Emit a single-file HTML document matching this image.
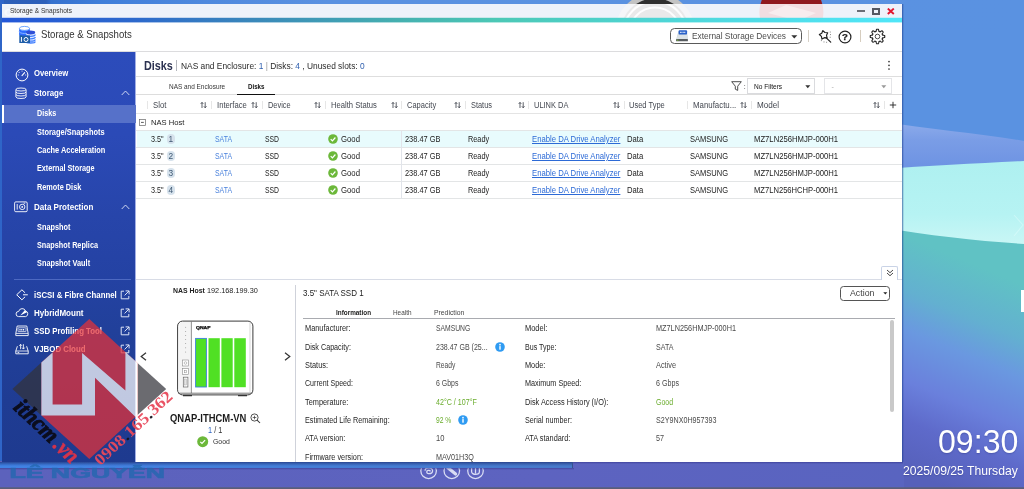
<!DOCTYPE html>
<html lang="en">
<head>
<meta charset="utf-8">
<title>Storage &amp; Snapshots</title>
<style>
*{box-sizing:border-box;margin:0;padding:0}
html,body{width:1024px;height:489px;overflow:hidden}
body{position:relative;font-family:"Liberation Sans",sans-serif;color:#222;background:#5a92e1}
.abs{position:absolute}
.t{position:absolute;white-space:nowrap;line-height:1;transform-origin:0 50%}
#stage{position:absolute;left:0;top:0;width:1024px;height:489px;will-change:transform}
#wall{position:absolute;left:0;top:0;width:1024px;height:489px}
a{color:inherit}
</style>
</head>
<body>
<!-- WALLPAPER -->
<svg id="wall" viewBox="0 0 1024 489" preserveAspectRatio="none">
<defs>
<linearGradient id="lav" x1="0" y1="0" x2="0" y2="1">
<stop offset="0" stop-color="#8eaceb"/><stop offset="0.35" stop-color="#7a9de6"/><stop offset="1" stop-color="#6a90e2"/>
</linearGradient>
<linearGradient id="cy" x1="0" y1="0" x2="0" y2="1">
<stop offset="0" stop-color="#aef0f0"/><stop offset="0.6" stop-color="#b6f3f3"/><stop offset="1" stop-color="#cdf7f6"/>
</linearGradient>
<linearGradient id="low" gradientUnits="userSpaceOnUse" x1="904" y1="235" x2="820.5" y2="435.3">
<stop offset="0" stop-color="#60c2c4"/><stop offset="0.234" stop-color="#63b0d0"/><stop offset="0.40" stop-color="#6a98e0"/><stop offset="0.617" stop-color="#6a80dc"/><stop offset="0.787" stop-color="#5e6aca"/><stop offset="1" stop-color="#5660ba"/>
</linearGradient>
<linearGradient id="bot" x1="0" y1="0" x2="1" y2="0">
<stop offset="0" stop-color="#5c62bc"/><stop offset="0.6" stop-color="#5d63c0"/><stop offset="1" stop-color="#5964c0"/>
</linearGradient>
<linearGradient id="topg" x1="0" y1="0" x2="1" y2="0">
<stop offset="0" stop-color="#2c5eb8"/><stop offset="0.045" stop-color="#2d60ba"/><stop offset="0.05" stop-color="#3470ce"/><stop offset="0.1" stop-color="#3f7eda"/><stop offset="0.2" stop-color="#4f89de"/><stop offset="0.32" stop-color="#5a91e1"/><stop offset="1" stop-color="#5a92e1"/>
</linearGradient>
</defs>
<rect width="1024" height="489" fill="#5a92e1"/>
<rect x="0" y="0" width="1024" height="30" fill="url(#topg)"/>
<rect x="0" y="0" width="4" height="470" fill="#2f65c8"/>
<!-- lavender-blue wave band -->
<path d="M880 121 C 930 130 980 133 1024 141 L1024 175 L880 175 Z" fill="url(#lav)"/>
<!-- light cyan band -->
<path d="M880 169 C 930 166 980 163 1024 161 L1024 250 L880 250 Z" fill="url(#cy)"/>
<!-- teal below -->
<path d="M880 227 C 930 236 980 241 1024 244 L1024 300 L880 300 Z" fill="url(#low)"/>
<rect x="880" y="262" width="144" height="227" fill="url(#low)"/>
<path d="M1014 215 L1023 225 L1014 236" fill="none" stroke="#e8ffff" stroke-width="1.1" opacity="0.4"/>
<rect x="1021" y="290" width="3" height="22" fill="#fff"/>
<!-- desktop icons peeking above the window -->
<circle cx="655" cy="33" r="40.3" fill="#c3c3c3"/>
<circle cx="655" cy="33" r="34.6" fill="#2f2f2f"/>
<circle cx="791.4" cy="12" r="32" fill="#8f181e"/>
<!-- bottom area -->
<rect x="0" y="461" width="904" height="28" fill="url(#bot)"/>
<rect x="0" y="487.3" width="1024" height="2" fill="#5a5e78"/>
</svg>
<div id="stage">
<div class="abs" style="left:902.00px;top:4.00px;width:1.30px;height:458.00px;background:rgba(25,60,140,0.5);"></div>
<div class="abs" style="left:903.30px;top:4.00px;width:1.00px;height:458.00px;background:rgba(25,60,140,0.15);"></div>
<div class="abs" style="left:2.00px;top:4.00px;width:900.00px;height:14.00px;background:#eef2fa;"></div>
<svg class="abs" style="left:600.00px;top:4.00px;overflow:hidden;" width="260" height="14" viewBox="0 0 260 14"><circle cx="55" cy="29" r="40.3" fill="#f5f6f9"/><circle cx="55" cy="29" r="34.6" fill="#e9e9ea"/><circle cx="55" cy="29" r="31.6" fill="none" stroke="#fdfdfe" stroke-width="2.2"/><circle cx="55" cy="29" r="25.4" fill="none" stroke="#fdfdfe" stroke-width="2"/><circle cx="191.4" cy="8" r="32" fill="#f2dde1"/><path d="M168 9 L186 1 L216 9 L198 17Z" fill="#f8ecee"/></svg>
<span class="t" style="left:3.50px;top:5.00px;font-size:13px;font-weight:bold;color:rgba(255,255,255,0.55);transform:scaleX(1.1333);">oud</span>
<span class="t" style="left:9.50px;top:8.00px;font-size:6.6px;color:#333;transform:scaleX(0.9940);">Storage &amp; Snapshots</span>
<div class="abs" style="left:857.20px;top:10.20px;width:7.80px;height:2.00px;background:#6a6d75;"></div>
<div class="abs" style="left:872.00px;top:8.00px;width:8.00px;height:7.00px;border:2px solid #555862;"></div>
<svg class="abs" style="left:887.00px;top:8.00px;" width="8" height="7" viewBox="0 0 8 7"><path d="M0.8 0.6 L6.8 6 M6.8 0.6 L0.8 6" stroke="#e3152e" stroke-width="1.9" fill="none"/></svg>
<div class="abs" style="left:2.00px;top:17.60px;width:900.00px;height:4.90px;background:linear-gradient(90deg,#2357d8 0%,#2d69cc 15%,#3a88ba 28%,#45b0b0 44%,#4cc8b6 55%,#4dd0c8 66%,#4fdce6 83%,#50e6f8 100%);"></div>
<div class="abs" style="left:2.00px;top:22.40px;width:900.00px;height:29.00px;background:#fff;"></div>
<div class="abs" style="left:2.00px;top:22.00px;width:900.00px;height:1.00px;background:linear-gradient(90deg,#2357d8 0%,#2d69cc 15%,#3a88ba 28%,#45b0b0 44%,#4cc8b6 55%,#4dd0c8 66%,#4fdce6 83%,#50e6f8 100%);opacity:0.42;"></div>
<div class="abs" style="left:2.00px;top:17.00px;width:900.00px;height:1.00px;background:linear-gradient(90deg,#2357d8 0%,#2d69cc 15%,#3a88ba 28%,#45b0b0 44%,#4cc8b6 55%,#4dd0c8 66%,#4fdce6 83%,#50e6f8 100%);opacity:0.22;"></div>
<div class="abs" style="left:135.50px;top:51.40px;width:766.50px;height:410.60px;background:#fff;"></div>
<div class="abs" style="left:2.00px;top:51.00px;width:900.00px;height:1.00px;background:#dcdcde;"></div>
<svg class="abs" style="left:18.00px;top:25.00px;" width="19" height="19" viewBox="0 0 19 19">
<g>
<path d="M1.1 3.4 V10 a5.4 2.2 0 0 0 10.8 0 V3.4z" fill="#2f6dff"/>
<path d="M1.1 6.3 a5.4 2.2 0 0 0 10.8 0" fill="none" stroke="#8dbcff" stroke-width="0.9"/>
<ellipse cx="6.5" cy="3.4" rx="5.1" ry="2" fill="#fff" stroke="#4a90ff" stroke-width="0.8"/>
<path d="M8 7.4 V16 a4.6 1.8 0 0 0 9.2 0 V7.4z" fill="#dfeaff"/>
<path d="M8 9.6 a4.6 1.8 0 0 0 9.2 0 M8 12 a4.6 1.8 0 0 0 9.2 0 M8 14.4 a4.6 1.8 0 0 0 9.2 0 M8 16.4 a4.6 1.6 0 0 0 9.2 0" fill="none" stroke="#3f7dff" stroke-width="1.3"/>
<ellipse cx="12.6" cy="7.5" rx="4.6" ry="1.9" fill="#2f4fd6"/>
<path d="M1.3 10.6 h10.7 v7.4 h-10.7z M1.8 10.7 v-0.5 h2.2 v0.5z" fill="#1e5da8"/>
<rect x="2.9" y="12" width="1" height="4.8" fill="#fff"/>
<circle cx="8" cy="14.5" r="2" fill="none" stroke="#fff" stroke-width="1"/>
</g></svg>
<span class="t" style="left:40.60px;top:30.00px;font-size:10.4px;color:#333;transform:scaleX(0.9238);">Storage &amp; Snapshots</span>
<div class="abs" style="left:670.00px;top:28.00px;width:132.00px;height:16.00px;background:#fff;border:1px solid #5a5a5a;border-radius:4.5px;"></div>
<svg class="abs" style="left:676.00px;top:30.00px;" width="13" height="12" viewBox="0 0 13 12">
<path d="M2.3 1.8 h8.6 l1 7.4 h-11.6z" fill="#cbd4da"/>
<path d="M2.1 4.6 h9.2 l.6 4.6 h-11.6z" fill="#dbe2e6"/>
<rect x="2.6" y="0.3" width="8.5" height="4.2" rx="0.9" fill="#2b62c9"/>
<path d="M4 2.4 h5.8" stroke="#dfe9fb" stroke-width="1.3" stroke-dasharray="0.9 0.5"/>
<rect x="0.1" y="9.1" width="11.8" height="2.2" rx="0.3" fill="#585c60"/>
<rect x="1" y="9.7" width="1.3" height="0.9" fill="#7ed321"/></svg>
<span class="t" style="left:692.00px;top:32.00px;font-size:9.3px;color:#4c4c4c;transform:scaleX(0.8958);">External Storage Devices</span>
<svg class="abs" style="left:790.50px;top:34.50px;" width="7" height="4" viewBox="0 0 7 4"><path d="M0.3 0.3 h6 l-3 3.2z" fill="#333"/></svg>
<div class="abs" style="left:808.30px;top:30.30px;width:1.00px;height:12.20px;background:#d6d0c6;"></div>
<svg class="abs" style="left:817.00px;top:28.00px;" width="16" height="16" viewBox="0 0 16 16"><path d="M5.86 2.60 L7.92 4.49 L10.70 4.75 L9.53 7.29 L10.14 10.01 L7.37 9.69 L4.97 11.11 L4.42 8.38 L2.32 6.53 L4.76 5.16Z" fill="none" stroke="#222" stroke-width="1.15" stroke-linejoin="round"/>
<path d="M9 9.6 L13.7 14.1" stroke="#222" stroke-width="1.3" stroke-linecap="round"/>
<path d="M13.3 4 v.1 M13.5 6.6 v.1 M13.2 9.2 v.1 M4.4 12.6 v.1 M7 13.9 v.1 M9.6 14.2 v.1" stroke="#666" stroke-width="0.9" stroke-linecap="round"/></svg>
<svg class="abs" style="left:837.50px;top:29.50px;" width="14" height="14" viewBox="0 0 14 14"><circle cx="7" cy="7" r="5.9" fill="none" stroke="#222" stroke-width="1.2"/><text x="7" y="10.4" font-size="9.6" font-weight="bold" text-anchor="middle" fill="#222" stroke="#222" stroke-width="0.25" font-family="Liberation Sans, sans-serif">?</text></svg>
<div class="abs" style="left:860.20px;top:30.30px;width:1.00px;height:12.20px;background:#d6cdbf;"></div>
<svg class="abs" style="left:869.00px;top:28.00px;" width="17" height="17" viewBox="0 0 17 17"><path d="M8.50 1.25 L8.78 1.26 L9.07 1.27 L9.35 1.30 L9.56 1.81 L9.72 2.37 L9.84 2.93 L9.93 3.45 L10.12 3.51 L10.32 3.57 L10.51 3.65 L10.70 3.73 L10.88 3.82 L11.07 3.92 L11.49 3.62 L11.97 3.30 L12.48 3.02 L12.99 2.81 L13.21 2.99 L13.42 3.18 L13.63 3.37 L13.82 3.58 L14.01 3.79 L14.19 4.01 L13.98 4.52 L13.70 5.03 L13.38 5.51 L13.08 5.93 L13.18 6.12 L13.27 6.30 L13.35 6.49 L13.43 6.68 L13.49 6.88 L13.55 7.07 L14.07 7.16 L14.63 7.28 L15.19 7.44 L15.70 7.65 L15.73 7.93 L15.74 8.22 L15.75 8.50 L15.74 8.78 L15.73 9.07 L15.70 9.35 L15.19 9.56 L14.63 9.72 L14.07 9.84 L13.55 9.93 L13.49 10.12 L13.43 10.32 L13.35 10.51 L13.27 10.70 L13.18 10.88 L13.08 11.07 L13.38 11.49 L13.70 11.97 L13.98 12.48 L14.19 12.99 L14.01 13.21 L13.82 13.42 L13.63 13.63 L13.42 13.82 L13.21 14.01 L12.99 14.19 L12.48 13.98 L11.97 13.70 L11.49 13.38 L11.07 13.08 L10.88 13.18 L10.70 13.27 L10.51 13.35 L10.32 13.43 L10.12 13.49 L9.93 13.55 L9.84 14.07 L9.72 14.63 L9.56 15.19 L9.35 15.70 L9.07 15.73 L8.78 15.74 L8.50 15.75 L8.22 15.74 L7.93 15.73 L7.65 15.70 L7.44 15.19 L7.28 14.63 L7.16 14.07 L7.07 13.55 L6.88 13.49 L6.68 13.43 L6.49 13.35 L6.30 13.27 L6.12 13.18 L5.93 13.08 L5.51 13.38 L5.03 13.70 L4.52 13.98 L4.01 14.19 L3.79 14.01 L3.58 13.82 L3.37 13.63 L3.18 13.42 L2.99 13.21 L2.81 12.99 L3.02 12.48 L3.30 11.97 L3.62 11.49 L3.92 11.07 L3.82 10.88 L3.73 10.70 L3.65 10.51 L3.57 10.32 L3.51 10.12 L3.45 9.93 L2.93 9.84 L2.37 9.72 L1.81 9.56 L1.30 9.35 L1.27 9.07 L1.26 8.78 L1.25 8.50 L1.26 8.22 L1.27 7.93 L1.30 7.65 L1.81 7.44 L2.37 7.28 L2.93 7.16 L3.45 7.07 L3.51 6.88 L3.57 6.68 L3.65 6.49 L3.73 6.30 L3.82 6.12 L3.92 5.93 L3.62 5.51 L3.30 5.03 L3.02 4.52 L2.81 4.01 L2.99 3.79 L3.18 3.58 L3.37 3.37 L3.58 3.18 L3.79 2.99 L4.01 2.81 L4.52 3.02 L5.03 3.30 L5.51 3.62 L5.93 3.92 L6.12 3.82 L6.30 3.73 L6.49 3.65 L6.68 3.57 L6.88 3.51 L7.07 3.45 L7.16 2.93 L7.28 2.37 L7.44 1.81 L7.65 1.30 L7.93 1.27 L8.22 1.26Z" fill="none" stroke="#222" stroke-width="1.15" stroke-linejoin="round"/><circle cx="8.5" cy="8.5" r="2.3" fill="none" stroke="#444" stroke-width="0.95"/></svg>
<div class="abs" style="left:2.00px;top:52.00px;width:133.50px;height:410.00px;background:linear-gradient(180deg,#2c4cbb 0%,#2b4ab7 20%,#2745aa 40%,#2442a3 55%,#21409a 68%,#1f3c93 85%,#1e3a8f 100%);"></div>
<div class="abs" style="left:135.00px;top:52.00px;width:1.00px;height:410.00px;background:#a3b0e5;"></div>
<div class="abs" style="left:2.00px;top:104.50px;width:133.50px;height:18.00px;background:#5671c9;"></div>
<div class="abs" style="left:2.00px;top:104.50px;width:1.60px;height:18.00px;background:#fff;"></div>
<span class="t" style="left:33.70px;top:69.00px;font-size:9px;font-weight:bold;color:#fff;transform:scaleX(0.8570);">Overview</span>
<span class="t" style="left:33.70px;top:89.00px;font-size:9px;font-weight:bold;color:#fff;transform:scaleX(0.8744);">Storage</span>
<span class="t" style="left:37.30px;top:109.00px;font-size:8.3px;font-weight:bold;color:#fff;transform:scaleX(0.8669);">Disks</span>
<span class="t" style="left:37.30px;top:128.00px;font-size:8.3px;font-weight:bold;color:#fff;transform:scaleX(0.8950);">Storage/Snapshots</span>
<span class="t" style="left:37.30px;top:146.00px;font-size:8.3px;font-weight:bold;color:#fff;transform:scaleX(0.8901);">Cache Acceleration</span>
<span class="t" style="left:37.30px;top:164.00px;font-size:8.3px;font-weight:bold;color:#fff;transform:scaleX(0.8717);">External Storage</span>
<span class="t" style="left:37.30px;top:183.00px;font-size:8.3px;font-weight:bold;color:#fff;transform:scaleX(0.8811);">Remote Disk</span>
<span class="t" style="left:33.70px;top:203.00px;font-size:9px;font-weight:bold;color:#fff;transform:scaleX(0.8915);">Data Protection</span>
<span class="t" style="left:37.30px;top:223.00px;font-size:8.3px;font-weight:bold;color:#fff;transform:scaleX(0.8859);">Snapshot</span>
<span class="t" style="left:37.30px;top:241.00px;font-size:8.3px;font-weight:bold;color:#fff;transform:scaleX(0.8759);">Snapshot Replica</span>
<span class="t" style="left:37.30px;top:259.00px;font-size:8.3px;font-weight:bold;color:#fff;transform:scaleX(0.8857);">Snapshot Vault</span>
<div class="abs" style="left:13.80px;top:278.80px;width:116.80px;height:1.00px;background:#4d69c2;"></div>
<span class="t" style="left:33.70px;top:291.00px;font-size:9px;font-weight:bold;color:#fff;transform:scaleX(0.8714);">iSCSI &amp; Fibre Channel</span>
<span class="t" style="left:33.70px;top:309.00px;font-size:9px;font-weight:bold;color:#fff;transform:scaleX(0.8920);">HybridMount</span>
<span class="t" style="left:33.70px;top:327.00px;font-size:9px;font-weight:bold;color:#fff;transform:scaleX(0.8681);">SSD Profiling Tool</span>
<span class="t" style="left:33.70px;top:345.00px;font-size:9px;font-weight:bold;color:#fff;transform:scaleX(0.8729);">VJBOD Cloud</span>
<svg class="abs" style="left:120.50px;top:90.30px;" width="9" height="6" viewBox="0 0 9 6"><path d="M0.7 5 L4.5 1 L8.3 5" fill="none" stroke="#dfe5f8" stroke-width="0.9"/></svg>
<svg class="abs" style="left:120.50px;top:203.50px;" width="9" height="6" viewBox="0 0 9 6"><path d="M0.7 5 L4.5 1 L8.3 5" fill="none" stroke="#dfe5f8" stroke-width="0.9"/></svg>
<svg class="abs" style="left:120.20px;top:289.70px;" width="10" height="10" viewBox="0 0 10 10"><path d="M4 1.2 H1.2 V8.8 H8.8 V6 M5.6 0.9 H9.1 V4.4 M9 1 L4.6 5.4" fill="none" stroke="#e6ebfa" stroke-width="0.95"/></svg>
<svg class="abs" style="left:120.20px;top:308.10px;" width="10" height="10" viewBox="0 0 10 10"><path d="M4 1.2 H1.2 V8.8 H8.8 V6 M5.6 0.9 H9.1 V4.4 M9 1 L4.6 5.4" fill="none" stroke="#e6ebfa" stroke-width="0.95"/></svg>
<svg class="abs" style="left:120.20px;top:326.20px;" width="10" height="10" viewBox="0 0 10 10"><path d="M4 1.2 H1.2 V8.8 H8.8 V6 M5.6 0.9 H9.1 V4.4 M9 1 L4.6 5.4" fill="none" stroke="#e6ebfa" stroke-width="0.95"/></svg>
<svg class="abs" style="left:120.20px;top:344.20px;" width="10" height="10" viewBox="0 0 10 10"><path d="M4 1.2 H1.2 V8.8 H8.8 V6 M5.6 0.9 H9.1 V4.4 M9 1 L4.6 5.4" fill="none" stroke="#e6ebfa" stroke-width="0.95"/></svg>
<svg class="abs" style="left:14.50px;top:67.60px;" width="14" height="14" viewBox="0 0 14 14"><circle cx="7" cy="7" r="5.9" fill="none" stroke="#fff" stroke-width="1"/>
<path d="M7 7.6 L9.6 4.6" stroke="#fff" stroke-width="1.1" stroke-linecap="round"/>
<path d="M3.2 7 h.1 M4.1 4.4 h.1 M7 3.1 h.1 M10.7 7 h.1" stroke="#fff" stroke-width="1" stroke-linecap="round"/></svg>
<svg class="abs" style="left:15.40px;top:87.00px;" width="12" height="13" viewBox="0 0 12 13"><ellipse cx="6" cy="2.5" rx="5.1" ry="1.5" fill="none" stroke="#fff" stroke-width="0.9"/>
<path d="M0.9 2.5 V10 a5.1 1.5 0 0 0 10.2 0 V2.5" fill="none" stroke="#fff" stroke-width="0.9"/>
<path d="M0.9 5 a5.1 1.5 0 0 0 10.2 0 M0.9 7.5 a5.1 1.5 0 0 0 10.2 0" fill="none" stroke="#fff" stroke-width="0.9"/></svg>
<svg class="abs" style="left:14.20px;top:200.60px;" width="14" height="12" viewBox="0 0 14 12"><rect x="0.6" y="0.9" width="12.6" height="9.8" rx="1.2" fill="none" stroke="#fff" stroke-width="0.9"/>
<path d="M3.2 3 V8.6" stroke="#fff" stroke-width="0.9"/>
<circle cx="8.2" cy="5.9" r="2.7" fill="none" stroke="#fff" stroke-width="0.9"/><circle cx="8.2" cy="5.9" r="0.9" fill="#fff"/>
<path d="M9.6 2.2 h1.6" stroke="#fff" stroke-width="0.9"/></svg>
<svg class="abs" style="left:15.50px;top:288.50px;" width="13" height="12" viewBox="0 0 13 12"><path d="M9.1 3.8 L5.9 0.8 L0.7 5.8 L5.9 10.8 L9.1 7.8 M7 5.8 H11.8" fill="none" stroke="#fff" stroke-width="1" stroke-linejoin="round"/></svg>
<svg class="abs" style="left:14.50px;top:307.00px;" width="14" height="11" viewBox="0 0 14 11"><path d="M3.6 9.6 a2.6 2.6 0 0 1 .1-5.2 a3.6 3.6 0 0 1 6.9-.4 a2.9 2.9 0 0 1 .1 5.6z" fill="none" stroke="#fff" stroke-width="0.9"/>
<path d="M5.2 8.6 L9.8 3.2 L12 5.2 Z" fill="#fff"/></svg>
<svg class="abs" style="left:14.50px;top:325.00px;" width="14" height="12" viewBox="0 0 14 12"><path d="M2.2 1 h9.6 l1.4 7.4 v2.2 h-12.4 v-2.2z" fill="none" stroke="#fff" stroke-width="0.9" stroke-linejoin="round"/>
<path d="M0.8 8.4 h12.4" stroke="#fff" stroke-width="0.8"/>
<rect x="3" y="2.8" width="8" height="3.8" rx="0.5" fill="none" stroke="#fff" stroke-width="0.7"/>
<path d="M4.4 4.7 h5.2" stroke="#fff" stroke-width="1.4" stroke-dasharray="1.2 0.6"/></svg>
<svg class="abs" style="left:14.50px;top:343.00px;" width="14" height="12" viewBox="0 0 14 12"><path d="M2.4 3.2 L0.8 8 v2.8 h12.4 V8 L11.6 3.2" fill="none" stroke="#fff" stroke-width="0.9" stroke-linejoin="round"/>
<path d="M0.8 8 h12.4 M2.6 9.5 h1.6" stroke="#fff" stroke-width="0.8"/>
<path d="M5.6 6.2 V1.4 M4.3 2.8 L5.6 1.3 L6.9 2.8 M8.4 1.2 V6 M7.1 4.6 L8.4 6.1 L9.7 4.6" fill="none" stroke="#fff" stroke-width="0.85"/></svg>
<span class="t" style="left:143.90px;top:60.00px;font-size:12.6px;font-weight:bold;color:#2b3150;transform:scaleX(0.8595);">Disks</span>
<div class="abs" style="left:176.20px;top:60.30px;width:1.00px;height:11.00px;background:#b4b6bc;"></div>
<span class="t" style="left:181.20px;top:61.00px;font-size:9.5px;color:#2a2a2a;transform:scaleX(0.8810);">NAS and Enclosure: <span style="color:#2f5fae">1</span> <span style="color:#999">|</span> Disks: <span style="color:#2f5fae">4</span> , Unused slots: <span style="color:#2f5fae">0</span></span>
<svg class="abs" style="left:887.00px;top:60.00px;" width="4" height="11" viewBox="0 0 4 11"><circle cx="2" cy="1.6" r="0.85" fill="#333"/><circle cx="2" cy="5.3" r="0.85" fill="#333"/><circle cx="2" cy="9" r="0.85" fill="#333"/></svg>
<div class="abs" style="left:135.50px;top:75.90px;width:766.50px;height:1.00px;background:#dedede;"></div>
<span class="t" style="left:168.80px;top:83.00px;font-size:7px;color:#333;transform:scaleX(0.9199);">NAS and Enclosure</span>
<span class="t" style="left:247.50px;top:83.00px;font-size:7px;font-weight:bold;color:#111;transform:scaleX(0.8833);">Disks</span>
<div class="abs" style="left:135.50px;top:94.20px;width:766.50px;height:1.00px;background:#dddddd;"></div>
<div class="abs" style="left:237.00px;top:93.60px;width:38.00px;height:1.60px;background:#111;"></div>
<svg class="abs" style="left:730.50px;top:81.00px;" width="11" height="10.5" viewBox="0 0 11 10.5"><path d="M0.7 0.7 H10.3 L6.7 5.2 V9.4 L4.3 8.2 V5.2 Z" fill="none" stroke="#3a3a3a" stroke-width="0.9"/></svg>
<span class="t" style="left:743.80px;top:83.00px;font-size:7px;color:#333;">:</span>
<div class="abs" style="left:747.30px;top:78.00px;width:67.50px;height:15.60px;background:#fff;border:1px solid #dadbde;"></div>
<span class="t" style="left:754.40px;top:83.00px;font-size:7.4px;color:#111;transform:scaleX(0.8907);">No Filters</span>
<svg class="abs" style="left:804.50px;top:84.60px;" width="6" height="4" viewBox="0 0 6 4"><path d="M0.3 0.3 h5 l-2.5 3z" fill="#333"/></svg>
<div class="abs" style="left:824.00px;top:78.00px;width:67.50px;height:15.60px;background:#fff;border:1px solid #e4e5e8;"></div>
<span class="t" style="left:831.50px;top:83.00px;font-size:7px;color:#aaa;">-</span>
<svg class="abs" style="left:880.50px;top:84.60px;" width="6" height="4" viewBox="0 0 6 4"><path d="M0.3 0.3 h5 l-2.5 3z" fill="#999"/></svg>
<div class="abs" style="left:147.20px;top:101.00px;width:1.10px;height:8.00px;background:#e6e6e6;"></div>
<div class="abs" style="left:211.20px;top:101.00px;width:1.10px;height:8.00px;background:#e6e6e6;"></div>
<div class="abs" style="left:261.50px;top:101.00px;width:1.10px;height:8.00px;background:#e6e6e6;"></div>
<div class="abs" style="left:325.00px;top:101.00px;width:1.10px;height:8.00px;background:#e6e6e6;"></div>
<div class="abs" style="left:401.10px;top:101.00px;width:1.10px;height:8.00px;background:#e6e6e6;"></div>
<div class="abs" style="left:464.80px;top:101.00px;width:1.10px;height:8.00px;background:#e6e6e6;"></div>
<div class="abs" style="left:528.30px;top:101.00px;width:1.10px;height:8.00px;background:#e6e6e6;"></div>
<div class="abs" style="left:623.80px;top:101.00px;width:1.10px;height:8.00px;background:#e6e6e6;"></div>
<div class="abs" style="left:687.00px;top:101.00px;width:1.10px;height:8.00px;background:#e6e6e6;"></div>
<div class="abs" style="left:750.80px;top:101.00px;width:1.10px;height:8.00px;background:#e6e6e6;"></div>
<div class="abs" style="left:883.50px;top:101.00px;width:1.10px;height:8.00px;background:#e6e6e6;"></div>
<span class="t" style="left:153.30px;top:101.00px;font-size:8.3px;color:#444851;transform:scaleX(0.9369);">Slot</span>
<span class="t" style="left:216.80px;top:101.00px;font-size:8.3px;color:#444851;transform:scaleX(0.9258);">Interface</span>
<span class="t" style="left:267.80px;top:101.00px;font-size:8.3px;color:#444851;transform:scaleX(0.8908);">Device</span>
<span class="t" style="left:330.80px;top:101.00px;font-size:8.3px;color:#444851;transform:scaleX(0.9211);">Health Status</span>
<span class="t" style="left:407.20px;top:101.00px;font-size:8.3px;color:#444851;transform:scaleX(0.9042);">Capacity</span>
<span class="t" style="left:470.70px;top:101.00px;font-size:8.3px;color:#444851;transform:scaleX(0.8925);">Status</span>
<span class="t" style="left:534.00px;top:101.00px;font-size:8.3px;color:#444851;transform:scaleX(0.8986);">ULINK DA</span>
<span class="t" style="left:629.20px;top:101.00px;font-size:8.3px;color:#444851;transform:scaleX(0.9057);">Used Type</span>
<span class="t" style="left:692.70px;top:101.00px;font-size:8.3px;color:#444851;transform:scaleX(0.9480);">Manufactu...</span>
<span class="t" style="left:756.50px;top:101.00px;font-size:8.3px;color:#444851;transform:scaleX(0.9776);">Model</span>
<svg class="abs" style="left:199.50px;top:100.80px;" width="7" height="8" viewBox="0 0 7 8"><path d="M2 7 V1.4 M0.7 2.9 L2 1.4 L3.3 2.9 M5.2 1.2 V6.8 M3.9 5.3 L5.2 6.8 L6.5 5.3" fill="none" stroke="#41454e" stroke-width="0.85"/></svg>
<svg class="abs" style="left:250.50px;top:100.80px;" width="7" height="8" viewBox="0 0 7 8"><path d="M2 7 V1.4 M0.7 2.9 L2 1.4 L3.3 2.9 M5.2 1.2 V6.8 M3.9 5.3 L5.2 6.8 L6.5 5.3" fill="none" stroke="#41454e" stroke-width="0.85"/></svg>
<svg class="abs" style="left:313.50px;top:100.80px;" width="7" height="8" viewBox="0 0 7 8"><path d="M2 7 V1.4 M0.7 2.9 L2 1.4 L3.3 2.9 M5.2 1.2 V6.8 M3.9 5.3 L5.2 6.8 L6.5 5.3" fill="none" stroke="#41454e" stroke-width="0.85"/></svg>
<svg class="abs" style="left:390.50px;top:100.80px;" width="7" height="8" viewBox="0 0 7 8"><path d="M2 7 V1.4 M0.7 2.9 L2 1.4 L3.3 2.9 M5.2 1.2 V6.8 M3.9 5.3 L5.2 6.8 L6.5 5.3" fill="none" stroke="#41454e" stroke-width="0.85"/></svg>
<svg class="abs" style="left:453.50px;top:100.80px;" width="7" height="8" viewBox="0 0 7 8"><path d="M2 7 V1.4 M0.7 2.9 L2 1.4 L3.3 2.9 M5.2 1.2 V6.8 M3.9 5.3 L5.2 6.8 L6.5 5.3" fill="none" stroke="#41454e" stroke-width="0.85"/></svg>
<svg class="abs" style="left:517.50px;top:100.80px;" width="7" height="8" viewBox="0 0 7 8"><path d="M2 7 V1.4 M0.7 2.9 L2 1.4 L3.3 2.9 M5.2 1.2 V6.8 M3.9 5.3 L5.2 6.8 L6.5 5.3" fill="none" stroke="#41454e" stroke-width="0.85"/></svg>
<svg class="abs" style="left:612.50px;top:100.80px;" width="7" height="8" viewBox="0 0 7 8"><path d="M2 7 V1.4 M0.7 2.9 L2 1.4 L3.3 2.9 M5.2 1.2 V6.8 M3.9 5.3 L5.2 6.8 L6.5 5.3" fill="none" stroke="#41454e" stroke-width="0.85"/></svg>
<svg class="abs" style="left:739.50px;top:100.80px;" width="7" height="8" viewBox="0 0 7 8"><path d="M2 7 V1.4 M0.7 2.9 L2 1.4 L3.3 2.9 M5.2 1.2 V6.8 M3.9 5.3 L5.2 6.8 L6.5 5.3" fill="none" stroke="#41454e" stroke-width="0.85"/></svg>
<svg class="abs" style="left:872.50px;top:100.80px;" width="7" height="8" viewBox="0 0 7 8"><path d="M2 7 V1.4 M0.7 2.9 L2 1.4 L3.3 2.9 M5.2 1.2 V6.8 M3.9 5.3 L5.2 6.8 L6.5 5.3" fill="none" stroke="#41454e" stroke-width="0.85"/></svg>
<svg class="abs" style="left:889.40px;top:101.00px;" width="8" height="8" viewBox="0 0 8 8"><path d="M4 0.8 V7.2 M0.8 4 H7.2" stroke="#222" stroke-width="0.9"/></svg>
<div class="abs" style="left:135.50px;top:113.00px;width:766.50px;height:1.00px;background:#e4e4e4;"></div>
<svg class="abs" style="left:139.20px;top:119.10px;" width="7" height="7" viewBox="0 0 7 7"><rect x="0.4" y="0.4" width="6" height="6" fill="#fff" stroke="#6a6a6a" stroke-width="0.7"/><path d="M2 3.4 H4.8" stroke="#333" stroke-width="0.8"/></svg>
<span class="t" style="left:151.00px;top:119.00px;font-size:7.6px;color:#222;transform:scaleX(1.0040);">NAS Host</span>
<div class="abs" style="left:136.50px;top:131.00px;width:765.50px;height:16.50px;background:#e8fbfd;"></div>
<div class="abs" style="left:135.50px;top:130.30px;width:766.50px;height:1.00px;background:#e3e5e6;"></div>
<div class="abs" style="left:135.50px;top:147.30px;width:766.50px;height:1.00px;background:#e3e5e6;"></div>
<div class="abs" style="left:135.50px;top:164.30px;width:766.50px;height:1.00px;background:#e3e5e6;"></div>
<div class="abs" style="left:135.50px;top:181.30px;width:766.50px;height:1.00px;background:#e3e5e6;"></div>
<div class="abs" style="left:135.50px;top:198.30px;width:766.50px;height:1.00px;background:#e3e5e6;"></div>
<div class="abs" style="left:401.10px;top:131.00px;width:1.00px;height:67.50px;background:#e1e4ea;"></div>
<span class="t" style="left:151.00px;top:135.00px;font-size:8.3px;color:#222;transform:scaleX(0.8699);">3.5&quot;</span>
<div class="abs" style="left:166.80px;top:133.70px;width:8.20px;height:10.20px;background:#d6e2ec;border-radius:4.1px;"></div>
<span class="t" style="left:168.60px;top:135.00px;font-size:8.3px;color:#3f5873;">1</span>
<span class="t" style="left:214.50px;top:135.00px;font-size:8.3px;color:#4a82dc;transform:scaleX(0.8314);">SATA</span>
<span class="t" style="left:265.00px;top:135.00px;font-size:8.3px;color:#222;transform:scaleX(0.8203);">SSD</span>
<svg class="abs" style="left:328.10px;top:134.10px;" width="10" height="10" viewBox="0 0 10 10"><circle cx="5" cy="5" r="4.8" fill="#6cb83a"/><path d="M2.7 5.2 L4.4 6.9 L7.4 3.5" fill="none" stroke="#fff" stroke-width="1.2"/></svg>
<span class="t" style="left:341.20px;top:135.00px;font-size:8.3px;color:#222;transform:scaleX(0.9358);">Good</span>
<span class="t" style="left:404.60px;top:135.00px;font-size:8.3px;color:#222;transform:scaleX(0.8920);">238.47 GB</span>
<span class="t" style="left:468.00px;top:135.00px;font-size:8.3px;color:#222;transform:scaleX(0.8836);">Ready</span>
<span class="t" style="left:531.60px;top:135.00px;font-size:8.3px;color:#2c6ad6;transform:scaleX(0.9301);text-decoration:underline;">Enable DA Drive Analyzer</span>
<span class="t" style="left:626.80px;top:135.00px;font-size:8.3px;color:#222;transform:scaleX(0.9240);">Data</span>
<span class="t" style="left:690.00px;top:135.00px;font-size:8.3px;color:#222;transform:scaleX(0.9055);">SAMSUNG</span>
<span class="t" style="left:753.80px;top:135.00px;font-size:8.3px;color:#222;transform:scaleX(0.9254);">MZ7LN256HMJP-000H1</span>
<span class="t" style="left:151.00px;top:152.00px;font-size:8.3px;color:#222;transform:scaleX(0.8699);">3.5&quot;</span>
<div class="abs" style="left:166.80px;top:150.70px;width:8.20px;height:10.20px;background:#d6e2ec;border-radius:4.1px;"></div>
<span class="t" style="left:168.60px;top:152.00px;font-size:8.3px;color:#3f5873;">2</span>
<span class="t" style="left:214.50px;top:152.00px;font-size:8.3px;color:#4a82dc;transform:scaleX(0.8314);">SATA</span>
<span class="t" style="left:265.00px;top:152.00px;font-size:8.3px;color:#222;transform:scaleX(0.8203);">SSD</span>
<svg class="abs" style="left:328.10px;top:151.10px;" width="10" height="10" viewBox="0 0 10 10"><circle cx="5" cy="5" r="4.8" fill="#6cb83a"/><path d="M2.7 5.2 L4.4 6.9 L7.4 3.5" fill="none" stroke="#fff" stroke-width="1.2"/></svg>
<span class="t" style="left:341.20px;top:152.00px;font-size:8.3px;color:#222;transform:scaleX(0.9358);">Good</span>
<span class="t" style="left:404.60px;top:152.00px;font-size:8.3px;color:#222;transform:scaleX(0.8920);">238.47 GB</span>
<span class="t" style="left:468.00px;top:152.00px;font-size:8.3px;color:#222;transform:scaleX(0.8836);">Ready</span>
<span class="t" style="left:531.60px;top:152.00px;font-size:8.3px;color:#2c6ad6;transform:scaleX(0.9301);text-decoration:underline;">Enable DA Drive Analyzer</span>
<span class="t" style="left:626.80px;top:152.00px;font-size:8.3px;color:#222;transform:scaleX(0.9240);">Data</span>
<span class="t" style="left:690.00px;top:152.00px;font-size:8.3px;color:#222;transform:scaleX(0.9055);">SAMSUNG</span>
<span class="t" style="left:753.80px;top:152.00px;font-size:8.3px;color:#222;transform:scaleX(0.9254);">MZ7LN256HMJP-000H1</span>
<span class="t" style="left:151.00px;top:169.00px;font-size:8.3px;color:#222;transform:scaleX(0.8699);">3.5&quot;</span>
<div class="abs" style="left:166.80px;top:167.70px;width:8.20px;height:10.20px;background:#d6e2ec;border-radius:4.1px;"></div>
<span class="t" style="left:168.60px;top:169.00px;font-size:8.3px;color:#3f5873;">3</span>
<span class="t" style="left:214.50px;top:169.00px;font-size:8.3px;color:#4a82dc;transform:scaleX(0.8314);">SATA</span>
<span class="t" style="left:265.00px;top:169.00px;font-size:8.3px;color:#222;transform:scaleX(0.8203);">SSD</span>
<svg class="abs" style="left:328.10px;top:168.10px;" width="10" height="10" viewBox="0 0 10 10"><circle cx="5" cy="5" r="4.8" fill="#6cb83a"/><path d="M2.7 5.2 L4.4 6.9 L7.4 3.5" fill="none" stroke="#fff" stroke-width="1.2"/></svg>
<span class="t" style="left:341.20px;top:169.00px;font-size:8.3px;color:#222;transform:scaleX(0.9358);">Good</span>
<span class="t" style="left:404.60px;top:169.00px;font-size:8.3px;color:#222;transform:scaleX(0.8920);">238.47 GB</span>
<span class="t" style="left:468.00px;top:169.00px;font-size:8.3px;color:#222;transform:scaleX(0.8836);">Ready</span>
<span class="t" style="left:531.60px;top:169.00px;font-size:8.3px;color:#2c6ad6;transform:scaleX(0.9301);text-decoration:underline;">Enable DA Drive Analyzer</span>
<span class="t" style="left:626.80px;top:169.00px;font-size:8.3px;color:#222;transform:scaleX(0.9240);">Data</span>
<span class="t" style="left:690.00px;top:169.00px;font-size:8.3px;color:#222;transform:scaleX(0.9055);">SAMSUNG</span>
<span class="t" style="left:753.80px;top:169.00px;font-size:8.3px;color:#222;transform:scaleX(0.9254);">MZ7LN256HMJP-000H1</span>
<span class="t" style="left:151.00px;top:186.00px;font-size:8.3px;color:#222;transform:scaleX(0.8699);">3.5&quot;</span>
<div class="abs" style="left:166.80px;top:184.70px;width:8.20px;height:10.20px;background:#d6e2ec;border-radius:4.1px;"></div>
<span class="t" style="left:168.60px;top:186.00px;font-size:8.3px;color:#3f5873;">4</span>
<span class="t" style="left:214.50px;top:186.00px;font-size:8.3px;color:#4a82dc;transform:scaleX(0.8314);">SATA</span>
<span class="t" style="left:265.00px;top:186.00px;font-size:8.3px;color:#222;transform:scaleX(0.8203);">SSD</span>
<svg class="abs" style="left:328.10px;top:185.10px;" width="10" height="10" viewBox="0 0 10 10"><circle cx="5" cy="5" r="4.8" fill="#6cb83a"/><path d="M2.7 5.2 L4.4 6.9 L7.4 3.5" fill="none" stroke="#fff" stroke-width="1.2"/></svg>
<span class="t" style="left:341.20px;top:186.00px;font-size:8.3px;color:#222;transform:scaleX(0.9358);">Good</span>
<span class="t" style="left:404.60px;top:186.00px;font-size:8.3px;color:#222;transform:scaleX(0.8920);">238.47 GB</span>
<span class="t" style="left:468.00px;top:186.00px;font-size:8.3px;color:#222;transform:scaleX(0.8836);">Ready</span>
<span class="t" style="left:531.60px;top:186.00px;font-size:8.3px;color:#2c6ad6;transform:scaleX(0.9301);text-decoration:underline;">Enable DA Drive Analyzer</span>
<span class="t" style="left:626.80px;top:186.00px;font-size:8.3px;color:#222;transform:scaleX(0.9240);">Data</span>
<span class="t" style="left:690.00px;top:186.00px;font-size:8.3px;color:#222;transform:scaleX(0.9055);">SAMSUNG</span>
<span class="t" style="left:753.80px;top:186.00px;font-size:8.3px;color:#222;transform:scaleX(0.9161);">MZ7LN256HCHP-000H1</span>
<div class="abs" style="left:881.40px;top:266.40px;width:16.80px;height:13.20px;background:#fff;border:1px solid #c9d3e6;border-bottom:none;border-radius:2px 2px 0 0;"></div>
<svg class="abs" style="left:886.00px;top:269.30px;" width="8" height="8" viewBox="0 0 8 8"><path d="M1 1 L4 3.7 L7 1 M1 4 L4 6.7 L7 4" fill="none" stroke="#333" stroke-width="0.9"/></svg>
<div class="abs" style="left:135.50px;top:278.70px;width:745.90px;height:1.00px;background:#d8dce6;"></div>
<div class="abs" style="left:898.20px;top:278.70px;width:3.80px;height:1.00px;background:#d8dce6;"></div>
<span class="t" style="left:173.00px;top:287.00px;font-size:7.6px;font-weight:bold;color:#222;transform:scaleX(0.9073);">NAS Host</span>
<span class="t" style="left:207.40px;top:287.00px;font-size:7.6px;color:#222;transform:scaleX(0.9616);">192.168.199.30</span>
<div class="abs" style="left:295.00px;top:285.40px;width:1.00px;height:176.60px;background:#cfd2da;"></div>
<svg class="abs" style="left:140.00px;top:352.00px;" width="7" height="9" viewBox="0 0 7 9"><path d="M6 0.7 L1.2 4.5 L6 8.3" fill="none" stroke="#333" stroke-width="1.25"/></svg>
<svg class="abs" style="left:284.30px;top:352.00px;" width="7" height="9" viewBox="0 0 7 9"><path d="M1 0.7 L5.8 4.5 L1 8.3" fill="none" stroke="#333" stroke-width="1.25"/></svg>
<svg class="abs" style="left:177.00px;top:319.60px;" width="77" height="77" viewBox="0 0 77 77">
<rect x="0.6" y="1.1" width="75.3" height="73.8" rx="5" fill="#fff" stroke="#3a3a3a" stroke-width="1"/>
<path d="M2.4 3.2 Q2.8 2 6 2 H14.2 V72.6 H1.8 Z" fill="#f4f4f4"/>
<path d="M14.4 1.6 V73.2" stroke="#666" stroke-width="0.7"/>
<path d="M1 73.2 H75.4" stroke="#555" stroke-width="0.8"/>
<path d="M6 75 h9 v1.3 h-9z M61 75 h9 v1.3 h-9z" fill="#333"/>
<path d="M73 2.2 V72.8" stroke="#c4c4c4" stroke-width="0.7"/>
<g fill="#9a9a9a"><circle cx="8.6" cy="7.2" r="0.5"/><circle cx="8.6" cy="11.4" r="0.5"/><circle cx="8.6" cy="15.4" r="0.5"/><circle cx="8.6" cy="19.4" r="0.5"/><circle cx="8.6" cy="23.5" r="0.5"/><circle cx="8.6" cy="27.7" r="0.5"/><circle cx="8.6" cy="31.9" r="0.5"/></g>
<rect x="5.5" y="40" width="6" height="6" fill="#fff" stroke="#8a8a8a" stroke-width="0.6"/><circle cx="8.5" cy="43" r="1.3" fill="none" stroke="#8a8a8a" stroke-width="0.5"/>
<rect x="5.5" y="48.6" width="6" height="6" fill="#fff" stroke="#8a8a8a" stroke-width="0.6"/><rect x="7.4" y="50.4" width="2.2" height="2.4" fill="none" stroke="#8a8a8a" stroke-width="0.5"/>
<rect x="6.3" y="57.2" width="4.6" height="9.8" fill="#fff" stroke="#666" stroke-width="0.7"/><rect x="7.7" y="59" width="1.8" height="6" fill="#e4e4e4" stroke="#999" stroke-width="0.4"/>
<text x="19" y="9.4" font-size="3.5" font-weight="bold" fill="#111" stroke="#111" stroke-width="0.25" font-family="Liberation Sans, sans-serif" textLength="14.6" lengthAdjust="spacingAndGlyphs">QNAP</text>
<rect x="18.6" y="18.4" width="10.8" height="48.6" fill="#50e024" stroke="#3b7fe0" stroke-width="0.9"/>
<rect x="31.5" y="18.2" width="11.3" height="49" fill="#50e024"/>
<rect x="44.4" y="18.2" width="11.3" height="49" fill="#50e024"/>
<rect x="57.3" y="18.2" width="11.5" height="49" fill="#50e024"/>
</svg>
<span class="t" style="left:170.20px;top:414.00px;font-size:10px;font-weight:bold;color:#1b1b1b;transform:scaleX(0.9420);">QNAP-ITHCM-VN</span>
<svg class="abs" style="left:249.60px;top:413.30px;" width="12" height="12" viewBox="0 0 12 12"><circle cx="4.5" cy="4.5" r="3.6" fill="none" stroke="#333" stroke-width="0.85"/><path d="M7.1 7.1 L10 10" stroke="#333" stroke-width="1.05"/><path d="M2.7 4.5 H6.3 M4.5 2.7 V6.3" stroke="#333" stroke-width="0.7"/></svg>
<span class="t" style="left:208.30px;top:426.00px;font-size:8.3px;color:#333;transform:scaleX(0.8854);"><span style="color:#2f66c4">1</span> / 1</span>
<svg class="abs" style="left:196.80px;top:435.80px;" width="12" height="12" viewBox="0 0 12 12"><circle cx="5.7" cy="5.7" r="5.5" fill="#6cb83a"/><path d="M3.3 5.9 L5 7.5 L8.1 4.2" fill="none" stroke="#fff" stroke-width="1.2"/></svg>
<span class="t" style="left:213.30px;top:438.00px;font-size:7.9px;color:#333;transform:scaleX(0.8693);">Good</span>
<span class="t" style="left:303.40px;top:289.00px;font-size:8.8px;color:#222;transform:scaleX(0.9062);">3.5&quot; SATA SSD 1</span>
<div class="abs" style="left:839.50px;top:286.00px;width:50.20px;height:14.60px;background:#fff;border:1px solid #555;border-radius:3.5px;"></div>
<span class="t" style="left:849.60px;top:289.00px;font-size:8.8px;color:#444;transform:scaleX(0.9976);">Action</span>
<svg class="abs" style="left:882.60px;top:292.30px;" width="5" height="3" viewBox="0 0 5 3"><path d="M0.3 0.2 h4 l-2 2.4z" fill="#222"/></svg>
<span class="t" style="left:335.60px;top:309.00px;font-size:7.2px;font-weight:bold;color:#222;transform:scaleX(0.8864);">Information</span>
<span class="t" style="left:393.30px;top:309.00px;font-size:7.2px;color:#444;transform:scaleX(0.8889);">Health</span>
<span class="t" style="left:434.20px;top:309.00px;font-size:7.2px;color:#444;transform:scaleX(0.9495);">Prediction</span>
<div class="abs" style="left:303.00px;top:318.00px;width:591.70px;height:1.00px;background:#a9abb0;"></div>
<div class="abs" style="left:890.10px;top:320.00px;width:4.20px;height:91.50px;background:#c9c9c9;border-radius:2px;"></div>
<span class="t" style="left:305.00px;top:324.00px;font-size:8.3px;color:#262626;transform:scaleX(0.8905);">Manufacturer:</span>
<span class="t" style="left:305.00px;top:343.00px;font-size:8.3px;color:#262626;transform:scaleX(0.8653);">Disk Capacity:</span>
<span class="t" style="left:305.00px;top:361.00px;font-size:8.3px;color:#262626;transform:scaleX(0.8902);">Status:</span>
<span class="t" style="left:305.00px;top:379.00px;font-size:8.3px;color:#262626;transform:scaleX(0.8509);">Current Speed:</span>
<span class="t" style="left:305.00px;top:398.00px;font-size:8.3px;color:#262626;transform:scaleX(0.8854);">Temperature:</span>
<span class="t" style="left:305.00px;top:416.00px;font-size:8.3px;color:#262626;transform:scaleX(0.8742);">Estimated Life Remaining:</span>
<span class="t" style="left:305.00px;top:434.00px;font-size:8.3px;color:#262626;transform:scaleX(0.8795);">ATA version:</span>
<span class="t" style="left:305.00px;top:453.00px;font-size:8.3px;color:#262626;transform:scaleX(0.8794);">Firmware version:</span>
<span class="t" style="left:436.40px;top:324.00px;font-size:8.3px;color:#4a4a4a;transform:scaleX(0.8173);">SAMSUNG</span>
<span class="t" style="left:436.40px;top:343.00px;font-size:8.3px;color:#4a4a4a;transform:scaleX(0.8472);">238.47 GB (25...</span>
<span class="t" style="left:436.40px;top:361.00px;font-size:8.3px;color:#4a4a4a;transform:scaleX(0.8044);">Ready</span>
<span class="t" style="left:436.40px;top:379.00px;font-size:8.3px;color:#4a4a4a;transform:scaleX(0.8371);">6 Gbps</span>
<span class="t" style="left:436.40px;top:398.00px;font-size:8.3px;color:#6aac2c;transform:scaleX(0.8574);">42°C / 107°F</span>
<span class="t" style="left:436.40px;top:416.00px;font-size:8.3px;color:#6aac2c;transform:scaleX(0.8087);">92 %</span>
<span class="t" style="left:436.40px;top:434.00px;font-size:8.3px;color:#4a4a4a;transform:scaleX(0.9098);">10</span>
<span class="t" style="left:436.40px;top:453.00px;font-size:8.3px;color:#4a4a4a;transform:scaleX(0.8679);">MAV01H3Q</span>
<span class="t" style="left:524.60px;top:324.00px;font-size:8.3px;color:#262626;transform:scaleX(0.8991);">Model:</span>
<span class="t" style="left:524.60px;top:343.00px;font-size:8.3px;color:#262626;transform:scaleX(0.8542);">Bus Type:</span>
<span class="t" style="left:524.60px;top:361.00px;font-size:8.3px;color:#262626;transform:scaleX(0.8843);">Mode:</span>
<span class="t" style="left:524.60px;top:379.00px;font-size:8.3px;color:#262626;transform:scaleX(0.8733);">Maximum Speed:</span>
<span class="t" style="left:524.60px;top:398.00px;font-size:8.3px;color:#262626;transform:scaleX(0.8865);">Disk Access History (I/O):</span>
<span class="t" style="left:524.60px;top:416.00px;font-size:8.3px;color:#262626;transform:scaleX(0.8689);">Serial number:</span>
<span class="t" style="left:524.60px;top:434.00px;font-size:8.3px;color:#262626;transform:scaleX(0.8839);">ATA standard:</span>
<span class="t" style="left:656.20px;top:324.00px;font-size:8.3px;color:#4a4a4a;transform:scaleX(0.8803);">MZ7LN256HMJP-000H1</span>
<span class="t" style="left:656.20px;top:343.00px;font-size:8.3px;color:#4a4a4a;transform:scaleX(0.8559);">SATA</span>
<span class="t" style="left:656.20px;top:361.00px;font-size:8.3px;color:#4a4a4a;transform:scaleX(0.8849);">Active</span>
<span class="t" style="left:656.20px;top:379.00px;font-size:8.3px;color:#4a4a4a;transform:scaleX(0.8595);">6 Gbps</span>
<span class="t" style="left:656.20px;top:398.00px;font-size:8.3px;color:#6aac2c;transform:scaleX(0.8373);">Good</span>
<span class="t" style="left:656.20px;top:416.00px;font-size:8.3px;color:#4a4a4a;transform:scaleX(0.8625);">S2Y9NX0H957393</span>
<span class="t" style="left:656.20px;top:434.00px;font-size:8.3px;color:#4a4a4a;transform:scaleX(0.8665);">57</span>
<svg class="abs" style="left:494.70px;top:341.70px;" width="10" height="10" viewBox="0 0 10 10"><circle cx="5" cy="5" r="4.8" fill="#2f9bf2"/><rect x="4.3" y="4.1" width="1.4" height="3.6" fill="#fff"/><circle cx="5" cy="2.7" r="0.85" fill="#fff"/></svg>
<svg class="abs" style="left:457.60px;top:415.00px;" width="10" height="10" viewBox="0 0 10 10"><circle cx="5" cy="5" r="4.8" fill="#2f9bf2"/><rect x="4.3" y="4.1" width="1.4" height="3.6" fill="#fff"/><circle cx="5" cy="2.7" r="0.85" fill="#fff"/></svg>
<svg class="abs" style="left:418.30px;top:460.80px;" width="68" height="20" viewBox="0 0 68 20"><g fill="none" stroke="#d9ddf4" stroke-width="1.25">
<circle cx="10.6" cy="9.8" r="7.8"/><circle cx="33.8" cy="9.8" r="7.8"/><circle cx="57.5" cy="9.8" r="7.8"/>
<path d="M7 9.6 a3.8 2.9 0 1 1 3.6 3 a2 1.6 0 1 1 1.9-2.3"/>
<path d="M29.6 6.4 L37.6 13" stroke-width="3.2" stroke-linecap="round"/>
<path d="M53.6 5.6 V10.8 a3.9 2.6 0 0 0 7.8 0 V5.6 M57.5 5.6 V12.6"/>
</g></svg>
<div class="abs" style="left:573.00px;top:461.80px;width:330.00px;height:2.60px;background:linear-gradient(180deg,rgba(45,45,130,0.55),rgba(45,45,130,0));"></div>
<div class="abs" style="left:0.00px;top:468.20px;width:574.00px;height:1.80px;background:linear-gradient(180deg,rgba(45,45,130,0.5),rgba(45,45,130,0));"></div>
<div class="abs" style="left:0.00px;top:461.80px;width:573.40px;height:6.50px;background:linear-gradient(180deg,rgba(25,35,100,0.62) 0%,rgba(25,35,100,0.32) 28%,rgba(25,35,100,0.08) 55%,rgba(25,35,100,0) 75%),linear-gradient(90deg,#3f82e4 0%,#4280de 25%,#4779ca 100%);border-right:1px solid #35528f;"></div>
<span class="t" style="left:937.60px;top:426.00px;font-size:32.4px;color:#fff;transform:scaleX(0.9916);text-shadow:0 0.5px 1.5px rgba(40,50,120,0.35);">09:30</span>
<span class="t" style="left:903.00px;top:465.00px;font-size:12.1px;color:#fff;transform:scaleX(1.0058);text-shadow:0 0.5px 1px rgba(40,50,120,0.3);">2025/09/25 Thursday</span>
<svg class="abs" style="left:0;top:300px;pointer-events:none" width="200" height="189" viewBox="0 300 200 189"><g opacity="0.72">
<polygon points="12.4,389.0 41.4,362.6 41.4,415.4" fill="#33333a"/>
<polygon points="166.2,389.0 137.5,362.9 137.5,415.1" fill="#33333a"/>
<polygon points="41.4,362.6 89.3,319.0 137.5,362.9 137.5,415.1 89.3,459.0 41.4,415.4" fill="#e83237"/>
<!-- L + N letters -->
<path d="M41.4 362.6 L52.6 352.4 L52.6 404.5 L82.1 404.5 L82.1 352.9 L125.4 390.6 L125.4 351.9 L137.5 362.9 L137.5 415.1 L135.6 416.9 L95 377.8 L95 415.6 L41.4 415.6 Z" fill="#fff"/>
</g>
<g font-family="Liberation Serif, serif" font-weight="bold">
<text transform="translate(12.6,408.4) rotate(43.2)" font-size="23" font-style="italic" fill="#0a0a14" stroke="#0a0a14" stroke-width="0.9" opacity="0.92" textLength="52" lengthAdjust="spacingAndGlyphs">ithcm</text>
<text transform="translate(51.9,446.6) rotate(43.2)" font-size="22.5" font-style="italic" fill="#dd3348" stroke="#dd3348" stroke-width="0.5" opacity="0.95" textLength="26" lengthAdjust="spacingAndGlyphs">.vn</text>
<text transform="translate(100.2,466.2) rotate(-43)" font-size="16.3" fill="#e8495b" opacity="0.95" textLength="100.5" lengthAdjust="spacingAndGlyphs">0908<tspan fill="#15151f">.</tspan>165<tspan fill="#15151f">.</tspan>362</text>
</g>
<g opacity="0.8"><text x="9.4" y="477.9" font-family="Liberation Sans, sans-serif" font-weight="bold" font-size="15.2" fill="#2468b0" stroke="#2468b0" stroke-width="0.7" textLength="155.6" lengthAdjust="spacingAndGlyphs">LÊ NGUYỄN</text></g>
</svg>
</div>
</body>
</html>
